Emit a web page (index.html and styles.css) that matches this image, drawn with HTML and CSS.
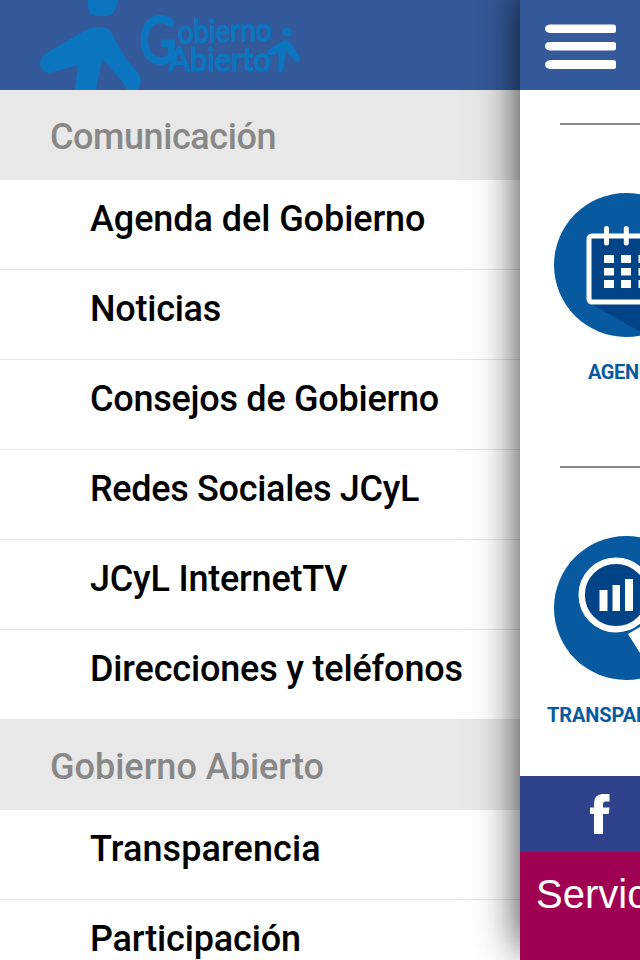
FILE: index.html
```html
<!DOCTYPE html>
<html lang="es">
<head>
<meta charset="utf-8">
<title>Gobierno Abierto</title>
<link rel="stylesheet" href="styles.css">
</head>
<body>
<div class="app">
  <nav class="menu">
    <header class="brand">
      <svg width="320" height="90" viewBox="0 0 320 90" role="img" aria-label="Gobierno Abierto">
        <g fill="#0b76bf">
          <path d="M88 0H118Q116 15 106 16H96Q88 14 88 6ZM90 28Q100 26 107 28Q110 30 112 34L126 59L139 74Q143 82 138 88L136 90H128Q124 86 121 80L102 59L96 90H75L78 65L53 72Q44 75 40 65Q40 58 45 54L84 31Z"/>
          <ellipse cx="287.300" cy="32" rx="4.800" ry="4.500"/>
          <path d="M282 41Q288 39 291 43L299 56Q301 60 298 62Q295 62 293 59L286 51L283 70Q281 74 278 71L279 53L272 55Q267 56 267 52Q267 50 270 49Z"/>
        </g>
        <g class="lettering">
          <text class="initial" x="139.500" y="62.500" textLength="37" lengthAdjust="spacingAndGlyphs">G</text>
          <text class="word" x="178" y="43" textLength="94" lengthAdjust="spacingAndGlyphs" transform="rotate(-1.500 178 43)">obierno</text>
          <text class="word" x="169" y="71" textLength="102" lengthAdjust="spacingAndGlyphs">Abierto</text>
        </g>
      </svg>
    </header>
    <h2 class="section s1">Comunicación</h2>
    <ul class="list">
      <li class="i1">Agenda del Gobierno</li>
      <li class="i2">Noticias</li>
      <li class="i3">Consejos de Gobierno</li>
      <li class="i4">Redes Sociales JCyL</li>
      <li class="i5">JCyL InternetTV</li>
      <li class="i6">Direcciones y teléfonos</li>
    </ul>
    <h2 class="section s2">Gobierno Abierto</h2>
    <ul class="list">
      <li class="i7">Transparencia</li>
      <li class="i8">Participación</li>
    </ul>
  </nav>
  <main class="page">
    <div class="topbar">
      <svg width="72" height="46" viewBox="0 0 72 46">
        <path fill="#fff" d="M5 .5H69Q71 1 71 3V7Q71 9 69 9H5Q0 8 0 4.700Q0 1 5 .5ZM5 18H69Q71 18.500 71 20V24.500Q71 26 69 26.500H5Q0 26 0 22Q0 18 5 18ZM5 36H69Q71 36.500 71 38V43Q71 45 69 45H5Q0 44 0 40.500Q0 37 5 36Z"/>
      </svg>
    </div>
    <section class="tile">
      <svg width="144" height="144" viewBox="0 0 144 144">
        <circle cx="72" cy="72" r="72" fill="#075a9f"/>
        <path fill="#004386" d="M38 111L97 145L144 112V70L110 45Z"/>
        <rect x="35" y="43" width="75" height="66" rx="3" fill="#004386" stroke="#fff" stroke-width="5"/>
        <path stroke="#fff" stroke-width="5" stroke-linecap="round" d="M52.500 35.500V50M72.300 35.500V50M92 35.500V50"/>
        <path fill="#fff" d="M50 62h10v8H50zM67 62h10v8H67zM84.500 62h10v8h-10zM50 75h10v7.500H50zM67 75h10v7.500H67zM84.500 75h10v7.500h-10zM50 87h10v8H50zM67 87h10v8H67zM84.500 87h10v8h-10z"/>
      </svg>
      <p class="agenda">AGENDA</p>
    </section>
    <section class="tile">
      <svg width="144" height="144" viewBox="0 0 144 144">
        <circle cx="72" cy="72" r="72" fill="#075a9f"/>
        <circle cx="62" cy="59" r="34.300" fill="#004386" stroke="#fff" stroke-width="6.400"/>
        <path fill="#fff" d="M45.500 54h8v21h-8zM58.500 49h7.500v26h-7.500zM71 43h8v32h-8zM74 98L91 88L110 120Q112 129 104 131Q97 132 93 128Z"/>
      </svg>
      <p class="transparencia">TRANSPARENCIA</p>
    </section>
    <div class="social">
      <svg width="20" height="41" viewBox="0 0 20 41">
        <path fill="#fff" d="M4 40V20H0V13.500H4V9Q4 1 12 0H19.500V7.500H15Q13 8 13 10V13.500H19.500L18.700 20H13V40Z"/>
      </svg>
    </div>
    <div class="services">Servicios</div>
  </main>
</div>
</body>
</html>
```
FILE: styles.css
```css
* {
  box-sizing: border-box;
}
body {
  margin: 0;
  overflow: hidden;
  background: #fff;
  font-family: Roboto, sans-serif;
}
.app {
  display: flex;
  width: 640px;
  height: 960px;
  overflow: hidden;
}
.menu {
  flex: 0 0 520px;
  height: 960px;
  overflow: hidden;
}
.brand {
  height: 90px;
  background: #345a9b;
}
.brand svg {
  display: block;
}
.lettering {
  fill: #0b76bf;
  stroke: #0b76bf;
  stroke-linejoin: round;
  font-family: Lato, sans-serif;
}
.initial {
  font-size: 64px;
  stroke-width: 3px;
}
.word {
  font-size: 32px;
  stroke-width: 1.4px;
}
.section {
  height: 90px;
  margin: 0;
  padding: 2px 0 0 50px;
  background: #e8e8e8;
  color: #888;
  font-size: 36px;
  font-weight: 500;
  line-height: 90px;
  white-space: nowrap;
}
.list {
  margin: 0;
  padding: 0;
  list-style: none;
}
.list li {
  height: 90px;
  padding-left: 90px;
  border-bottom: 1px solid #e4e4e4;
  font-size: 36px;
  font-weight: 500;
  line-height: 79px;
  white-space: nowrap;
}
.s1 { letter-spacing: -.43px; }
.list .i1 { letter-spacing: -.07px; }
.list .i2 { letter-spacing: -.25px; }
.list .i3 { letter-spacing: -.26px; }
.list .i4 { letter-spacing: -.31px; }
.list .i5 { letter-spacing: -.22px; }
.list .i6 { letter-spacing: -.17px; }
.list .i7 { letter-spacing: .1px; }
.list .i8 { letter-spacing: -.17px; }
.page {
  position: relative;
  z-index: 1;
  flex: 0 0 120px;
  height: 960px;
  background: #fff;
}
.page::before {
  content: "";
  position: absolute;
  z-index: -1;
  inset: -12px 0 12px;
  box-shadow: 0 0 40px rgba(0, 0, 0, .8);
}
.topbar {
  height: 90px;
  padding: 24px 0 0 25px;
  background: #345a9b;
}
.topbar svg,
.tile svg,
.social svg {
  display: block;
}
.tile {
  width: 120px;
  height: 343px;
  padding: 33px 0 0 34px;
  overflow: hidden;
}
.tile::before {
  content: "";
  display: block;
  width: 80px;
  height: 2px;
  margin: 0 0 68px 6px;
  background: #888;
}
.tile p {
  margin: 23px 0 0;
  color: #075a9f;
  font-size: 20px;
  font-weight: 700;
  line-height: 24px;
  white-space: nowrap;
}
.tile .agenda {
  margin-left: 34px;
  letter-spacing: -.4px;
}
.tile .transparencia {
  margin-left: -7px;
  letter-spacing: -.1px;
}
.social {
  height: 76px;
  padding: 18px 0 0 70px;
  background: #2d428a;
}
.services {
  height: 108px;
  padding: 19px 0 0 16px;
  overflow: hidden;
  background: #9f0051;
  color: #fff;
  font: 40px/46px "Liberation Sans", sans-serif;
  white-space: nowrap;
}
```
